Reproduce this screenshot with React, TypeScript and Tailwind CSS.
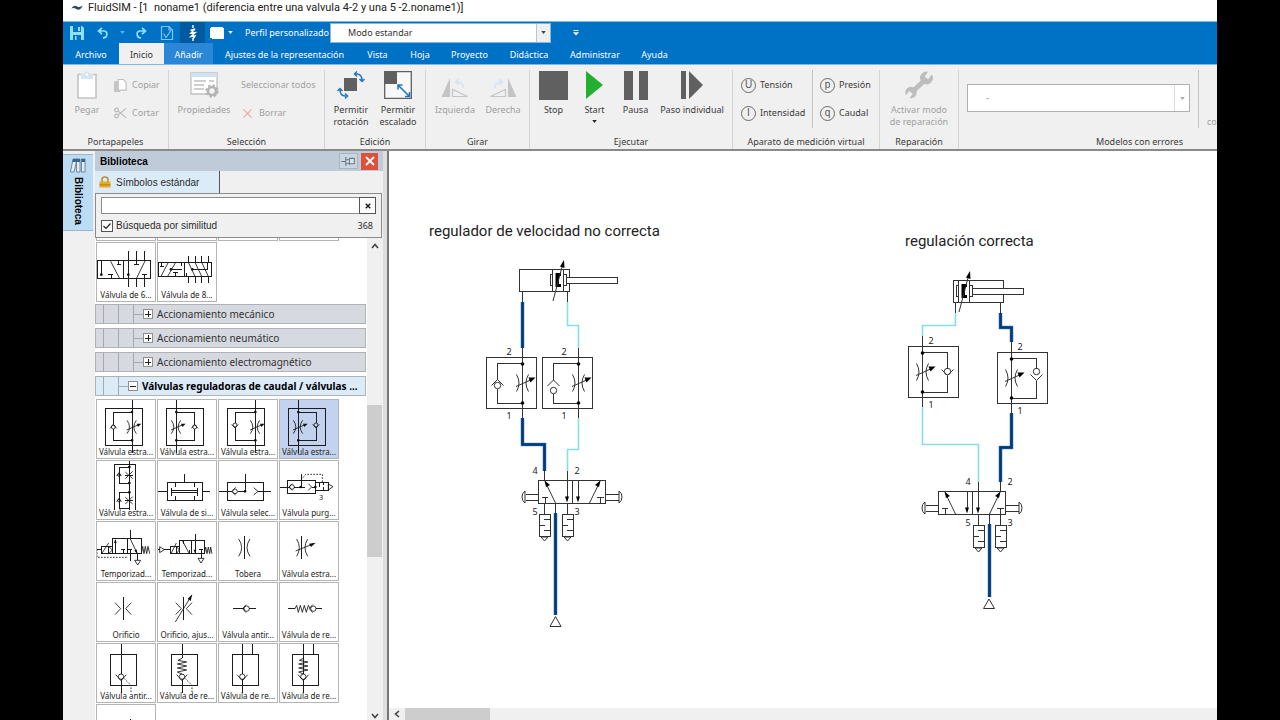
import type { ReactNode } from "react";

type Glyph = { s?: string; d?: string; f?: string; dash?: string; circles?: number[][]; dots?: number[][]; text?: string };

const throttle = (x: number, y: number) =>
  `M${x - 15} ${y - 20}Q${x} ${y} ${x - 15} ${y + 20}M${x + 13} ${y - 20}Q${x - 2} ${y} ${x + 13} ${y + 20}M${x - 16} ${y + 9}L${x + 20} ${y - 7}`;
const throttleHead = (x: number, y: number) => `M${x + 28} ${y - 10}l-14 0l4 10z`;

const flowControl = (line: number, loop: number, cy: number, up: boolean): Glyph => ({
  s: `M28 28H140V139H28ZM${line} 0V163M${line} 39H${loop}V${cy - 6}M${loop} ${cy + 6}V124H${line}`,
  d: throttle(line, 84) + (up ? `M${loop - 10} ${cy + 4}L${loop} ${cy - 7}L${loop + 10} ${cy + 4}` : `M${loop - 10} ${cy - 2}L${loop} ${cy + 9}L${loop + 10} ${cy - 2}`),
  f: throttleHead(line, 84),
  circles: [[loop, cy, 6]],
  dots: [[line, 39], [line, 124]],
});

const zigzag = (x: number) => `M${x} 46l-12 6l26 5l-28 6l28 6l-28 6l28 6l-28 6l14 6`;

const valveTop: { name: string; glyph: Glyph }[] = [
  {
    name: "Válvula de 6...",
    glyph: {
      s: "M3 55H164V110H3ZM82 55V110M16 55V98M97 28V134M121 28V68M114 68H130M146 28V55M121 110V134M146 110V134M68 55V68M62 68H76M45 98V110M37 98H52M146 98V110M139 98H154",
      d: "M44 58L70 108M121 110L148 55",
      dots: [[16, 98], [97, 98]],
    },
  },
  {
    name: "Válvula de 8...",
    glyph: {
      s: "M3 61H164V103H3ZM82 61V103M94 42V61M114 42V61M134 42V61M154 42V61M94 103V122M114 103V122M134 103V122M154 103V122M14 61V72M8 72H20M42 82H76M74 61V72M54 92V103M48 92H62M106 82H152V61M88 92V103",
      d: "M12 103L34 61M32 103L56 61M94 61L114 103M114 61L134 103M134 61L154 103",
      dots: [[42, 82], [106, 82]],
    },
  },
];

const valves: { name: string; glyph: Glyph; active?: boolean }[] = [
  { name: "Válvula estra...", glyph: flowControl(108, 52, 84, true) },
  { name: "Válvula estra...", glyph: flowControl(58, 113, 84, true) },
  { name: "Válvula estra...", glyph: flowControl(112, 51, 78, false) },
  { name: "Válvula estra...", glyph: flowControl(58, 111, 78, false), active: true },
  {
    name: "Válvula estra...",
    glyph: {
      s: "M54 149V14H118V149M100 0V149M100 21H69V69H100M100 97H69V146H100M88 45H110M88 121H110",
      d: "M88 36L110 56M88 56L110 34M88 112L110 132M88 132L110 110M62 48L69 38L76 48M62 125L69 115L76 125",
      circles: [[69, 45, 4], [69, 122, 4]],
      dots: [[100, 21], [100, 69], [100, 97]],
    },
  },
  {
    name: "Válvula de si...",
    glyph: { s: "M30 68H136V121H30ZM82 41V68M2 94H30M136 94H160M56 68V81M111 68V81M56 109V121M111 109V121M43 83V107M121 83V107M43 91H121M43 98H121" },
  },
  {
    name: "Válvula selec...",
    glyph: {
      s: "M27 68H136V121H27ZM81 41V94M2 94H42M59 94H81M120 94H160",
      d: "M53 82L42 94L53 106M107 83L120 94L107 105",
      circles: [[51, 94, 7]],
      dots: [[81, 94]],
    },
  },
  {
    name: "Válvula purg...",
    glyph: {
      s: "M24 60H109V101H24ZM66 41V81M0 81H32M46 81H78M98 81H109M109 68H148V92H109ZM122 68V80M134 92V80M134 68V76",
      d: "M40 71L30 81L40 91M88 71L98 81L88 91M148 72L162 80L148 90Z",
      dash: "M66 60L80 43H130V68",
      circles: [[39, 81, 7]],
      dots: [[65, 81], [109, 81]],
      text: "3",
    },
  },
  {
    name: "Temporizad...",
    glyph: {
      s: "M49 52H136V98H49ZM93 52V98M15 76H49V98H15ZM38 76V98M58 58V98M102 28V52M102 98V120M124 98V118M81 86V98M74 86H88M102 86V98M95 86H109M4 86H15",
      d: "M102 52L124 98M17 98L38 66M38 76L49 87L38 98M136 98L140 76L144 98L148 76L152 98L156 76L161 98M116 118H134L125 132Z",
      dash: "M3 85V109H95",
      f: "M58 54l-4 12h8zM124 98l-9-9l7-4z",
    },
  },
  {
    name: "Temporizad...",
    glyph: {
      s: "M67 57H142V98H67ZM104 57V98M40 76H67V98H40ZM58 76V98M22 86H40M114 40V98M132 98V112M97 86V98M132 86V98M125 86H139M78 57V68M2 86H8",
      d: "M75 57L97 98M42 98L58 66M58 76L67 87L58 98M142 98L146 78L150 98L154 78L158 98L161 78L165 98M8 77L22 86L8 95ZM123 112H141L132 126Z",
      f: "M114 97l-4-11h8z",
    },
  },
  { name: "Tobera", glyph: { s: "M79 46V114", d: "M62 54Q80 80 62 106M96 54Q78 80 96 106" } },
  { name: "Válvula estra...", glyph: { s: "M68 46V114", d: "M53 54Q69 80 53 106M86 54Q70 80 86 106M50 90L104 68", f: "M110 65l-20 3l6 10z" } },
  { name: "Orificio", glyph: { s: "M81 46V114", d: "M57 62L74 80L57 98M106 62L89 80L106 98" } },
  { name: "Orificio, ajus...", glyph: { s: "M79 46V114", d: "M56 62L73 80L56 98M105 62L88 80L105 98M55 120L104 40", f: "M106 37l-14 13l9 7z" } },
  { name: "Válvula antir...", glyph: { s: "M46 80H77M94 80H114", d: "M84 68L74 80L84 92", circles: [[86, 80, 8]] } },
  { name: "Válvula de re...", glyph: { s: "M28 80H48M111 80H130", d: "M48 80L53 70L58 91L64 70L70 91L76 70L82 91L88 70L94 80M101 68L91 80L101 92", circles: [[103, 80, 8]] } },
  {
    name: "Válvula antir...",
    glyph: { s: "M43 33H121V127H43ZM75 0V92M75 109V150", d: "M59 95L75 113L91 95", dash: "M84 106L105 127V150", circles: [[75, 101, 8]] },
  },
  {
    name: "Válvula de re...",
    glyph: { s: "M43 33H121V127H43ZM75 0V46M75 109V150", d: zigzag(75) + "M59 95L75 113L91 95", dash: "M84 106L105 127V150", circles: [[75, 101, 8]] },
  },
  { name: "Válvula de re...", glyph: { s: "M43 33H121V127H43ZM73 0V92M73 109V150M104 0V33", d: "M57 95L73 113L89 95", circles: [[73, 101, 8]] } },
  {
    name: "Válvula de re...",
    glyph: { s: "M41 33H119V127H41ZM73 0V92M73 109V150M103 0V33", d: zigzag(73) + "M57 95L73 113L89 95", circles: [[73, 101, 8]] },
  },
  { name: "", glyph: { s: "M104 46V90" } },
];

function Cell({ name, glyph, active }: { name: string; glyph: Glyph; active?: boolean }) {
  return (
    <button
      type="button"
      aria-label={name || "Válvula"}
      className={`grid size-[60px] border border-[#b4b4b4] ${active ? "bg-[#c3d2ee]" : "bg-white"}`}
    >
      <svg viewBox="3 3 174 174" className="col-start-1 row-start-1 size-[58px]" fill="none" stroke="#1c1c1c" strokeWidth="2.6">
        {glyph.s && <path d={glyph.s} shapeRendering="crispEdges" strokeWidth="3" />}
        {glyph.d && <path d={glyph.d} />}
        {glyph.dash && <path d={glyph.dash} strokeDasharray="5 4" />}
        {glyph.f && <path d={glyph.f} fill="#111" stroke="none" />}
        {glyph.circles?.map(([x, y, r]) => <circle key={`${x}-${y}`} cx={x} cy={y} r={r} />)}
        {glyph.dots?.map(([x, y]) => <circle key={`${x}-${y}`} cx={x} cy={y} r="4" fill="#111" stroke="none" />)}
        {glyph.text && (
          <text x="120" y="120" fontSize="22" fill="#222" stroke="none">
            {glyph.text}
          </text>
        )}
      </svg>
      <span className="col-start-1 row-start-1 self-end overflow-hidden text-center text-[8px] leading-[12px] whitespace-nowrap text-[#222]">{name}</span>
    </button>
  );
}

function Branch({ name, open }: { name: string; open?: boolean }) {
  return (
    <button
      type="button"
      className={`flex h-[20px] w-[271px] items-center border border-[#b0b2b6] text-left text-[10px] whitespace-nowrap ${open ? "bg-[#dcebf8] font-bold text-black" : "bg-[#d6d9df] text-[#333]"}`}
    >
      <span className="ml-[7px] h-full w-px bg-[#a6a9ae]" />
      <span className="ml-[14px] h-full w-px bg-[#a6a9ae]" />
      {!open && <span className="ml-[14px] h-full w-px bg-[#a6a9ae]" />}
      <span className="h-px w-[9px] bg-[#a6a9ae]" />
      <svg viewBox="0 0 10 10" className="mr-[4px] size-[10px] shrink-0" shapeRendering="crispEdges">
        <path d="M.5 .5H9.5V9.5H.5Z" fill="#fff" stroke="#8f8f8f" />
        <path d={open ? "M2 5.5H8" : "M2 5.5H8M5.5 2V8"} stroke="#222" />
      </svg>
      {name}
    </button>
  );
}

function Group({ label, className, children }: { label: string; className: string; children: ReactNode }) {
  return (
    <section aria-label={label} className={`flex shrink-0 flex-col border-r border-[#d4d4d4] ${className}`}>
      <div className="flex h-[66px] items-start">{children}</div>
      <h2 className="text-center text-[9px] leading-[12px]">{label}</h2>
    </section>
  );
}

function Big({ icon, lines, className = "", off }: { icon: ReactNode; lines: string[]; className?: string; off?: boolean }) {
  return (
    <button type="button" disabled={off} className={`flex flex-col items-center text-[9px] leading-[12px] whitespace-nowrap ${off ? "text-[#a0a0a0]" : ""} ${className}`}>
      <span className="mb-[4px] flex h-[30px] items-center justify-center">{icon}</span>
      {lines.map((l) => (
        <span key={l}>{l}</span>
      ))}
    </button>
  );
}

function Small({ icon, label, off }: { icon?: ReactNode; label: string; off?: boolean }) {
  return (
    <button type="button" disabled={off} className={`flex h-[28px] items-center gap-[4px] text-[9px] whitespace-nowrap ${off ? "text-[#a0a0a0]" : ""}`}>
      {icon}
      {label}
    </button>
  );
}

function Meter({ letter }: { letter: string }) {
  return (
    <span className="flex size-[15px] items-center justify-center rounded-full border border-[#6a6a6a] font-['Liberation_Sans',sans-serif] text-[10px] leading-none text-[#555]">{letter}</span>
  );
}

function Caret({ className }: { className: string }) {
  return (
    <svg viewBox="0 0 6 4" className={`h-[3px] w-[5px] ${className}`}>
      <path d="M0 0H6L3 4Z" fill="currentColor" />
    </svg>
  );
}

const tabs: [string, string][] = [
  ["Archivo", "w-[56px]"],
  ["Inicio", "w-[45px] bg-[#f0f0f0] text-[#333]"],
  ["Añadir", "w-[49px] bg-[#2a86d6]"],
  ["Ajustes de la representación", "w-[143px]"],
  ["Vista", "w-[43px]"],
  ["Hoja", "w-[42px]"],
  ["Proyecto", "w-[57px]"],
  ["Didáctica", "w-[62px]"],
  ["Administrar", "w-[70px]"],
  ["Ayuda", "w-[49px]"],
];

function QuickAccess() {
  return (
    <div className="flex h-[21px] items-center text-white">
      <button type="button" aria-label="Guardar" className="ml-[6px]">
        <svg viewBox="0 0 16 16" className="size-[16px]">
          <path d="M1 1H13L15 3V15H1Z" fill="#8fe0fb" />
          <path d="M4 1H12V7H4ZM4 10H12V15H4Z" fill="#0a72c8" />
          <path d="M9 2H11V6H9ZM6 11H7.500V15H6Z" fill="#8fe0fb" />
        </svg>
      </button>
      <button type="button" aria-label="Deshacer" className="ml-[12px]">
        <svg viewBox="0 0 12 12" className="size-[12px]" fill="none" stroke="#8fe0fb" strokeWidth="1.700">
          <path d="M5 .8L1.500 4L5 7.200M1.500 4H7C11 4 11 10.500 6 11" />
        </svg>
      </button>
      <Caret className="ml-[11px] text-[#5fb4ea]" />
      <button type="button" aria-label="Rehacer" className="ml-[10px]">
        <svg viewBox="0 0 12 12" className="size-[12px]" fill="none" stroke="#8fe0fb" strokeWidth="1.700">
          <path d="M7 .8L10.500 4L7 7.200M10.500 4H5C1 4 1 10.500 6 11" />
        </svg>
      </button>
      <button type="button" aria-label="Comprobar" className="ml-[13px]">
        <svg viewBox="0 0 14 16" className="h-[16px] w-[14px]" fill="none" stroke="#7cc4f2" strokeWidth="1.200">
          <path d="M1.500 1.500H9L12.500 5V14.500H1.500ZM9 1.500V5H12.500" />
          <path d="M3.500 8.500L6 12.500L11 5.500" />
        </svg>
      </button>
      <button type="button" aria-label="Simulación" className="ml-[6px] flex h-full w-[25px] items-center justify-center bg-[#005a9e]">
        <svg viewBox="0 0 8 16" className="h-[16px] w-[8px]" fill="none" stroke="#fff" strokeWidth="1.400">
          <path d="M4 0V3M4 13V16M1.500 5.500L6 4L2 8L6.500 7.500L2 11.500L6 11L4 14" />
        </svg>
      </button>
      <button type="button" aria-label="Color" className="ml-[5px] flex items-center gap-[4px]">
        <svg viewBox="0 0 14 12" className="h-[12px] w-[14px]">
          <path d="M1 0H13V1H14V12H2V11H0V1H1Z" fill="#fff" />
        </svg>
        <Caret className="text-white" />
      </button>
      <label htmlFor="perfil" className="ml-[12px] w-[85px] text-[9px] whitespace-nowrap">
        Perfil personalizado
      </label>
      <div className="relative h-[20px] w-[221px]">
        <select id="perfil" className="block h-full w-full appearance-none border border-[#8ab6dc] bg-white pl-[17px] text-[9px] text-[#333]">
          <option>Modo estandar</option>
        </select>
        <span className="pointer-events-none absolute inset-y-px right-px flex w-[14px] items-center justify-center border-l border-[#b8c4d0] bg-[#f0f0f0]">
          <Caret className="text-[#444]" />
        </span>
      </div>
      <button type="button" aria-label="Personalizar" className="ml-[22px]">
        <svg viewBox="0 0 6 6" className="size-[6px]">
          <path d="M.5 0H5.500V1H.5ZM0 2.200H6L3 5.500Z" fill="#fff" />
        </svg>
      </button>
    </div>
  );
}

function Ribbon() {
  return (
    <div className="flex h-[84px] overflow-hidden bg-[#f0f0f0] pt-[5px] text-[#3a3a3a]">
      <Group label="Portapapeles" className="w-[106px]">
        <Big
          off
          className="w-[48px]"
          lines={["Pegar"]}
          icon={
            <svg viewBox="0 0 20 28" className="h-[28px] w-[20px]">
              <path d="M1 3.500H19V27H1Z" fill="#fff" stroke="#c3c3c3" strokeWidth="1.600" />
              <path d="M4 3H7Q7 .5 10 .5Q13 .5 13 3H16V8H4Z" fill="#d3e4f3" />
              <circle cx="10" cy="3.500" r="1.300" fill="#fff" />
            </svg>
          }
        />
        <div className="mt-px ml-[3px]">
          <Small
            off
            label="Copiar"
            icon={
              <svg viewBox="0 0 14 15" className="mr-px h-[15px] w-[13px]" fill="#fff" stroke="#c0c0c0" strokeWidth="1.200">
                <path d="M.8 3.500H6V14H.8Z" fill="#c8c8c8" />
                <path d="M4.500 1H10L13 4V12.500H4.500Z" />
              </svg>
            }
          />
          <Small
            off
            label="Cortar"
            icon={
              <svg viewBox="0 0 14 12" className="mr-px h-[12px] w-[13px]" fill="none" stroke="#b8b8b8" strokeWidth="1.300">
                <circle cx="2.800" cy="2.800" r="2" />
                <circle cx="2.800" cy="9.200" r="2" />
                <path d="M4.500 4L13 11M4.500 8L13 1" />
              </svg>
            }
          />
        </div>
      </Group>
      <Group label="Selección" className="w-[156px]">
        <Big
          off
          className="ml-[7px] w-[56px]"
          lines={["Propiedades"]}
          icon={
            <svg viewBox="0 0 29 26" className="h-[26px] w-[29px]">
              <path d="M1 1H27V22H1Z" fill="#fff" stroke="#c0c0c0" strokeWidth="1.300" />
              <path d="M1 1H27V5H1Z" fill="#cfe2f3" />
              <path d="M4 9H16M4 13H14M4 17H14M19 9H24" stroke="#c0c0c0" strokeWidth="1.700" />
              <circle cx="22" cy="19" r="4" fill="#f4f4f4" stroke="#b4b4b4" strokeWidth="2.600" />
              <circle cx="22" cy="19" r="5.800" fill="none" stroke="#b4b4b4" strokeWidth="1.800" strokeDasharray="2.300 2.250" />
            </svg>
          }
        />
        <div className="mt-px ml-[9px]">
          <Small off label="Seleccionar todos" />
          <Small
            off
            label="Borrar"
            icon={
              <svg viewBox="0 0 10 10" className="mr-[3px] ml-[2px] size-[9px]" stroke="#efa8a0" strokeWidth="1.300">
                <path d="M.5 .5L9.500 9.500M9.500 .5L.5 9.500" />
              </svg>
            }
          />
        </div>
      </Group>
      <Group label="Edición" className="w-[101px]">
        <Big
          className="ml-[3px] w-[46px]"
          lines={["Permitir", "rotación"]}
          icon={
            <svg viewBox="0 0 28 28" className="size-[28px]" fill="none" stroke="#2277bd" strokeWidth="1.500">
              <path d="M7 7H20V20H7Z" fill="#606060" stroke="none" />
              <path d="M18 3H20Q25 3 25 10M20 .5L17.500 3L20 5.500M22.500 8L25 10.500L27.500 8" />
              <path d="M9 25H8Q3 25 3 18M8 22.500L10.500 25L8 27.500M.5 20L3 17.500L5.500 20" />
            </svg>
          }
        />
        <Big
          className="w-[48px]"
          lines={["Permitir", "escalado"]}
          icon={
            <svg viewBox="0 0 28 28" className="size-[28px]" fill="none">
              <path d="M.7 .7H27.300V27.300H.7Z" stroke="#606060" strokeWidth="1.300" fill="#f8f8f8" />
              <path d="M0 0H13V13H0Z" fill="#606060" />
              <path d="M14.500 14.500L25 25M14 18.500V14H18.500M25.500 21V25.500H21" stroke="#2277bd" strokeWidth="1.600" />
            </svg>
          }
        />
      </Group>
      <Group label="Girar" className="w-[104px]">
        <Big
          off
          className="ml-[5px] w-[48px]"
          lines={["Izquierda"]}
          icon={
            <svg viewBox="0 0 28 28" className="size-[28px]" fill="none">
              <path d="M9 7V26H.5Z" fill="#c4c4c4" />
              <path d="M11.500 18.500V25.500H26.500Z" stroke="#c4c4c4" strokeWidth="1.200" />
              <path d="M22 17Q23 11 15 11M18 8L14.500 11L18 14" stroke="#cfe4f5" strokeWidth="1.500" />
            </svg>
          }
        />
        <Big
          off
          className="w-[48px]"
          lines={["Derecha"]}
          icon={
            <svg viewBox="0 0 28 28" className="size-[28px]" fill="none">
              <path d="M19 7V26H27.500Z" fill="#c4c4c4" />
              <path d="M16.500 18.500V25.500H1.500Z" stroke="#c4c4c4" strokeWidth="1.200" />
              <path d="M6 17Q5 11 13 11M10 8L13.500 11L10 14" stroke="#cfe4f5" strokeWidth="1.500" />
            </svg>
          }
        />
      </Group>
      <Group label="Ejecutar" className="w-[203px]">
        <Big className="ml-[3px] w-[41px]" lines={["Stop"]} icon={<span className="block size-[29px] bg-[#606060]" />} />
        <div className="flex w-[41px] flex-col items-center">
          <Big
            className="w-full"
            lines={["Start"]}
            icon={
              <svg viewBox="0 0 17 28" className="h-[28px] w-[17px]">
                <path d="M0 0L17 14L0 28Z" fill="#22b02f" />
              </svg>
            }
          />
          <Caret className="mt-[4px] text-[#222]" />
        </div>
        <Big
          className="w-[41px]"
          lines={["Pausa"]}
          icon={
            <svg viewBox="0 0 24 29" className="h-[29px] w-[24px]">
              <path d="M0 0H9V29H0ZM15 0H24V29H15Z" fill="#606060" />
            </svg>
          }
        />
        <Big
          className="w-[72px]"
          lines={["Paso individual"]}
          icon={
            <svg viewBox="0 0 22 28" className="h-[28px] w-[22px]">
              <path d="M0 0H5V28H0ZM8 0L22 14L8 28Z" fill="#606060" />
            </svg>
          }
        />
      </Group>
      <Group label="Aparato de medición virtual" className="w-[147px]">
        <div className="h-[58px] w-[80px] border-r border-[#c4c4c4] pt-px pl-[8px]">
          <Small icon={<Meter letter="U" />} label="Tensión" />
          <Small icon={<Meter letter="I" />} label="Intensidad" />
        </div>
        <div className="pt-px pl-[7px]">
          <Small icon={<Meter letter="p" />} label="Presión" />
          <Small icon={<Meter letter="q" />} label="Caudal" />
        </div>
      </Group>
      <Group label="Reparación" className="w-[79px]">
        <Big
          off
          className="w-full"
          lines={["Activar modo", "de reparación"]}
          icon={
            <svg viewBox="0 0 30 28" className="h-[28px] w-[30px]">
              <path d="M8 21L22 8" stroke="#bdbdbd" strokeWidth="5" />
              <circle cx="22.500" cy="7" r="6.500" fill="#bdbdbd" />
              <circle cx="7" cy="21.500" r="5.700" fill="#bdbdbd" />
              <path d="M22.500 7L28 -1M7 21.500L1.500 28.500" stroke="#f0f0f0" strokeWidth="4.500" />
            </svg>
          }
        />
      </Group>
      <section aria-label="Modelos con errores" className="flex min-w-0 flex-1 flex-col">
        <div className="flex h-[66px] items-start justify-end">
          <div className="relative mt-[14px] mr-[8px] ml-[8px] h-[28px] min-w-0 flex-1">
            <select aria-label="Modelo" disabled className="block h-full w-full appearance-none border border-[#b0b0b0] bg-white pl-[18px] text-[9px] text-[#888] opacity-100">
              <option>-</option>
            </select>
            <span className="pointer-events-none absolute inset-y-px right-px flex w-[15px] items-center justify-center border-l border-[#dcdcdc]">
              <Caret className="text-[#aaa]" />
            </span>
          </div>
          <span className="h-[58px] w-[19px] overflow-hidden border-l border-[#c4c4c4] pt-[46px] pl-[8px] text-[9px] leading-[12px] text-[#a0a0a0]">co</span>
        </div>
        <h2 className="ml-[103px] text-center text-[9px] leading-[12px]">Modelos con errores</h2>
      </section>
    </div>
  );
}

function Library() {
  return (
    <aside className="flex w-[288px] shrink-0 flex-col bg-[#f0f0f0]">
      <header className="flex h-[20px] items-center bg-[#bfcbd9] pl-[5px] font-['Liberation_Sans',sans-serif] text-[10px] font-bold text-black">
        <h2 className="flex-1">Biblioteca</h2>
        <button type="button" aria-label="Fijar" className="mr-[3px] flex h-[16px] w-[19px] items-center justify-center border border-[#a9b5c3] bg-[#ccd6e1]">
          <svg viewBox="0 0 16 10" className="h-[9px] w-[15px]" fill="#dbe3ec" stroke="#68798c" strokeWidth="1.200">
            <path d="M0 5H5M5 0V10M5 3H9V7H5M9 1V9M9 1.500H14.500V7.500H9" />
          </svg>
        </button>
        <button type="button" aria-label="Cerrar" className="mr-[5px] flex size-[17px] items-center justify-center bg-[#dd5138]">
          <svg viewBox="0 0 10 10" className="size-[10px]" stroke="#fff" strokeWidth="1.800">
            <path d="M1 1L9 9M9 1L1 9" />
          </svg>
        </button>
      </header>
      <div className="flex h-[22px] items-end">
        <button
          type="button"
          className="flex h-[22px] w-[125px] items-center gap-[5px] border-r border-[#555] bg-[#dcebf8] pl-[4px] font-['Liberation_Sans',sans-serif] text-[10px] text-[#2c2c2c]"
        >
          <svg viewBox="0 0 12 12" className="size-[12px]">
            <path d="M3 6V3.500Q3 1 6 1Q9 1 9 3.500V6" fill="none" stroke="#b8933a" strokeWidth="1.600" />
            <path d="M.5 5.500H11.500V11.500H.5Z" fill="#e5aa26" />
            <path d="M.5 8H11.500V9.500H.5Z" fill="#c98c12" />
          </svg>
          Símbolos estándar
        </button>
      </div>
      <div className="h-[45px] w-[287px] border border-[#8c8c8c] px-[5px] pt-[3px] font-['Liberation_Sans',sans-serif] text-[10px] text-[#2c2c2c]">
        <div className="flex">
          <input aria-label="Buscar símbolo" type="text" className="h-[17px] min-w-0 flex-1 border border-[#8c8c8c] bg-white px-1" />
          <button type="button" aria-label="Borrar búsqueda" className="-ml-px flex h-[17px] w-[17px] items-center justify-center border border-[#555] bg-white">
            <svg viewBox="0 0 8 8" className="size-[6px]" stroke="#111" strokeWidth="1.800">
              <path d="M1 1L7 7M7 1L1 7" />
            </svg>
          </button>
        </div>
        <div className="mt-[5px] flex items-center">
          <span className="relative size-[12px]">
            <input id="similitud" type="checkbox" defaultChecked className="block size-[12px] appearance-none border border-[#555] bg-white" />
            <svg viewBox="0 0 12 12" className="pointer-events-none absolute inset-0" fill="none" stroke="#222" strokeWidth="1.200">
              <path d="M2.500 6L5 8.500L9.500 3.500" />
            </svg>
          </span>
          <label htmlFor="similitud" className="ml-[3px] flex-1 leading-[14px]">
            Búsqueda por similitud
          </label>
          <span className="mr-[3px] font-['Noto_Sans',sans-serif] text-[9px] leading-[14px]">368</span>
        </div>
      </div>
      <div className="flex min-h-0 flex-1">
        <div className="min-w-0 flex-1 overflow-hidden bg-white">
          <div className="ml-px flex gap-px">
            {[0, 1, 2, 3].map((n) => (
              <span key={n} className="h-[3px] w-[60px] border-x border-b border-[#b4b4b4]" />
            ))}
          </div>
          <div className="mt-px mb-[2px] ml-px flex gap-px">
            {valveTop.map((v) => (
              <Cell key={v.name} {...v} />
            ))}
          </div>
          <div className="mb-[3px] flex flex-col gap-1">
            <Branch name="Accionamiento mecánico" />
            <Branch name="Accionamiento neumático" />
            <Branch name="Accionamiento electromagnético" />
            <Branch name="Válvulas reguladoras de caudal / válvulas ..." open />
          </div>
          <div className="ml-px grid grid-cols-[60px_60px_60px_60px] gap-px">
            {valves.map((v, i) => (
              <Cell key={i} {...v} />
            ))}
          </div>
        </div>
        <div className="mr-px flex w-[15px] flex-col items-center justify-between bg-[#f0f0f0]">
          <svg viewBox="0 0 8 6" className="mt-[5px] h-[6px] w-[8px]" fill="none" stroke="#444" strokeWidth="1.600">
            <path d="M1 5L4 1.500L7 5" />
          </svg>
          <span className="mt-[3px] mb-auto flex h-[305px] w-full flex-col justify-end">
            <span className="h-[152px] w-full bg-[#cdcdcd]" />
          </span>
          <svg viewBox="0 0 8 6" className="mb-px h-[6px] w-[8px]" fill="none" stroke="#444" strokeWidth="1.600">
            <path d="M1 1L4 4.500L7 1" />
          </svg>
        </div>
      </div>
    </aside>
  );
}

function Cylinder({ x, y, body }: { x: number; y: number; body: number }) {
  return (
    <g transform={`translate(${x} ${y})`}>
      <g shapeRendering="crispEdges">
        <path d={`M${body} 9.500h50v22h-50z`} />
        <path d="M3.500 9.500V31.500M14.500 9.500V31.500M3.500 14.500H1.500V25.500H3.500M14.500 14.500H17.500V25.500H14.500" />
        <path d="M17.500 17.500H68.500V23.500H17.500Z" fill="#fff" />
      </g>
      <path d="M6.500 13H12V16H10V24H12V27H6.500Z" fill="#000" stroke="none" />
      <path d="M4 41L13.500 5" />
      <path d="M15 0L15.500 8L11 6.500Z" fill="#000" stroke="none" />
    </g>
  );
}

function Throttle({ x, y }: { x: number; y: number }) {
  return (
    <g transform={`translate(${x} ${y})`}>
      <path d="M-6 -8.500Q-1 0 -6 8.500M6 -8.500Q1 0 6 8.500M-6.500 3.500L8 -3" />
      <path d="M13 -5.500L6 -5.500L8 -.5Z" fill="#000" stroke="none" />
    </g>
  );
}

function OneWay({ x, y, line, loop, ball, seat, up }: { x: number; y: number; line: number; loop: number; ball: number; seat: number; up?: boolean }) {
  const top = up ? Math.min(seat, ball - 3) : ball - 3;
  const bottom = up ? ball + 3 : Math.max(seat, ball + 3);
  const v = up ? 6 : -6;
  return (
    <g>
      <g shapeRendering="crispEdges">
        <path d={`M${x} ${y}h49.500v50.500h-49.500z`} />
        <path d={`M${line} ${y - 10}v70M${line} ${y + 6}H${loop}V${top}M${loop} ${bottom}V${y + 45.500}H${line}`} />
      </g>
      <circle cx={line} cy={y + 6.500} r="1.800" fill="#000" stroke="none" />
      <circle cx={line} cy={y + 45.500} r="1.800" fill="#000" stroke="none" />
      <circle cx={loop} cy={ball} r="3.200" />
      <path d={`M${loop - 6} ${seat + v}L${loop} ${seat}L${loop + 6} ${seat + v}`} />
      <Throttle x={line} y={y + 25.500} />
    </g>
  );
}

function Silencer({ x, y }: { x: number; y: number }) {
  return (
    <g transform={`translate(${x} ${y})`}>
      <path shapeRendering="crispEdges" d="M0 -11V0M-5.500 0H5.500V22.500H-5.500ZM5.500 5.500H-.5M-5.500 11H0M5.500 16.500H-.5" />
      <path d="M-3.500 23H3.500L0 27Z" />
    </g>
  );
}

function Directional({ x, y }: { x: number; y: number }) {
  return (
    <g transform={`translate(${x} ${y})`}>
      <g shapeRendering="crispEdges">
        <path d="M0 0H67V22.500H0ZM34 0V22.500M28.500 0V18M39.500 0V18" />
        <path d="M6.500 22.500V16.500M3 16.500H9.500M62 22.500V16.500M58.500 16.500H65" />
        <path d="M0 13.500H-13M0 19.500H-13M67 13.500H80M67 19.500H80" />
      </g>
      <path d="M28.500 22l-2 -6h4zM39.500 22l-2 -6h4z" fill="#000" stroke="none" />
      <path d="M17 22.500L6.500 1M51 22.500L61.500 1" />
      <path d="M6 0L11.500 4.500L7.500 6.500ZM62 0L56.500 4.500L60.500 6.500Z" fill="#000" stroke="none" />
      <path d="M-13.500 10.500V22.500Q-16.500 20.500 -16.500 16.500Q-16.500 12.500 -13.500 10.500ZM80.500 10.500V22.500Q83.500 20.500 83.500 16.500Q83.500 12.500 80.500 10.500Z" />
    </g>
  );
}

const ports: [number, number, string][] = [
  [509, 355, "2"], [509, 419, "1"], [564, 355, "2"], [564, 419, "1"],
  [535, 474, "4"], [577, 474, "2"], [535, 515, "5"], [577, 515, "3"],
  [931, 344, "2"], [931, 408, "1"], [1020, 350, "2"], [1020, 414, "1"],
  [968, 485, "4"], [1010, 485, "2"], [968, 526, "5"], [1010, 526, "3"],
];

const pressure = "M522.500 302V348M522.500 418V444.500H544.500V471M555.500 513V615M1000.500 313V327.500H1011.500V342M1011.500 413V447.500H1000.500V482M989.500 524V597";
const exhaust = "M567.500 302V325.500H578.500V348M578.500 418V449.500H567.500V471M955.500 313V325.500H922.500V336M922.500 407V444.500H978.500V482";

function Circuit() {
  return (
    <svg role="img" aria-label="Circuito neumático" viewBox="389 151 828 557" className="block h-[557px] w-[828px] shrink-0" fill="none" stroke="#333">
      <g shapeRendering="crispEdges">
        <path d="M522.500 291V357M567.500 291V302M578.500 347V357M544.500 470V481M567.500 470V481M555.500 503V513" />
        <path d="M955.500 302V313M1000.500 302V313M922.500 336V346M1011.500 342V352M978.500 481V491M1000.500 481V492M989.500 514V524" />
      </g>
      <Cylinder x={549} y={260} body={-29.500} />
      <Cylinder x={955} y={271} body={-1.500} />
      <OneWay x={486.500} y={357.500} line={522.500} loop={497.500} ball={385.500} seat={379.500} up />
      <OneWay x={542.500} y={357.500} line={578.500} loop={553.500} ball={390.500} seat={380} up />
      <OneWay x={908.500} y={346.500} line={922.500} loop={947.500} ball={371.500} seat={375.500} />
      <OneWay x={997.500} y={352.500} line={1011.500} loop={1036.500} ball={371.500} seat={380.500} />
      <Directional x={538.500} y={480.500} />
      <Directional x={938.500} y={491.500} />
      <Silencer x={544.500} y={514} />
      <Silencer x={567.500} y={514} />
      <Silencer x={978.500} y={525} />
      <Silencer x={1000.500} y={525} />
      <path d="M555.500 616.500L561 626.500H550ZM989 599L994.500 608.500H983.500Z" />
      <path d={exhaust} stroke="#86dfe0" strokeWidth="1.600" />
      <path d={pressure} stroke="#4f86bd" strokeWidth="3.600" />
      <path d={pressure} stroke="#003a78" strokeWidth="2.600" />
      <g fill="#222" stroke="none">
        <g fontSize="9" textAnchor="middle">
          {ports.map(([x, y, n]) => (
            <text key={`${x}-${y}`} x={x} y={y}>
              {n}
            </text>
          ))}
        </g>
        <g className="font-['Roboto',sans-serif] text-[15px]">
          <text x="429" y="236">
            regulador de velocidad no correcta
          </text>
          <text x="905" y="246">
            regulación correcta
          </text>
        </g>
      </g>
    </svg>
  );
}

export default function App() {
  return (
    <div className="h-screen overflow-hidden bg-black px-[63px] font-['Noto_Sans','Open_Sans',sans-serif]">
      <div className="flex h-full flex-col overflow-hidden bg-[#f0f0f0]">
        <header className="flex h-[21px] items-start bg-white pl-[8px]">
          <svg viewBox="0 0 13 8" className="mt-[4px] h-[7px] w-[12px]">
            <path d="M0 5Q3 0 7 3Q10 4 13 2Q10 8 6 6Q3 4 0 5Z" fill="#2c4a63" />
          </svg>
          <h1 className="ml-[5px] font-['Roboto',sans-serif] text-[11px] leading-[16px] whitespace-pre text-[#222]">FluidSIM - [1  noname1 (diferencia entre una valvula 4-2 y una 5 -2.noname1)]</h1>
        </header>
        <div className="flex h-[44px] flex-col border-t border-b border-[#7db8e6] bg-[#0072c6]">
          <QuickAccess />
          <nav className="flex flex-1 text-[9px] text-white">
            {tabs.map(([name, cls]) => (
              <a key={name} href="#" className={`flex items-center justify-center pt-[2px] whitespace-nowrap ${cls}`}>
                {name}
              </a>
            ))}
          </nav>
        </div>
        <Ribbon />
        <div className="h-[2px] shrink-0 bg-[#8a8a8a]" />
        <div className="flex min-h-0 flex-1">
          <div className="w-[32px] shrink-0 pt-[3px]">
            <button type="button" className="flex h-[77px] w-[30px] flex-col items-center border-y border-[#9fb6ca] bg-[#bbdcf3] pt-[3px]">
              <svg viewBox="0 0 16 15" className="h-[15px] w-[16px]">
                <path d="M3 1H7L4 14H.5ZM6.500 1H10V14H6.500ZM11.500 1H15V14H11.500Z" fill="#e6edf3" stroke="#5b7286" strokeWidth=".8" />
                <path d="M3 1H7V4H2.500ZM6.500 1H10V4H6.500ZM11.500 1H15V4H11.500Z" fill="#33678f" />
              </svg>
              <span className="mt-[4px] font-['Liberation_Sans',sans-serif] text-[10px] leading-[14px] font-bold text-black [writing-mode:vertical-rl]">Biblioteca</span>
            </button>
          </div>
          <Library />
          <div className="w-[6px] shrink-0 border-r-2 border-[#777] bg-[#dedede]" />
          <main className="flex min-w-0 flex-1 flex-col bg-white">
            <div className="min-h-0 flex-1 overflow-hidden">
              <Circuit />
            </div>
            <div className="flex h-[12px] shrink-0 items-center bg-[#f0f0f0]">
              <svg viewBox="0 0 6 8" className="mx-[5px] h-[8px] w-[6px]" fill="none" stroke="#444" strokeWidth="1.600">
                <path d="M5 1L1.500 4L5 7" />
              </svg>
              <span className="h-full w-[85px] bg-[#cdcdcd]" />
            </div>
          </main>
        </div>
      </div>
    </div>
  );
}
